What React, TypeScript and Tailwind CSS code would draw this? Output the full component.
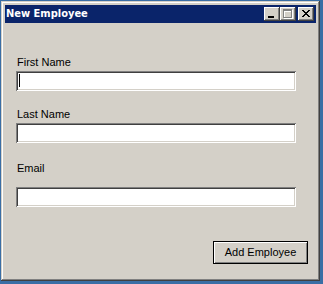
import React from "react";

const raised =
  "shadow-[inset_-1px_-1px_#404040,inset_1px_1px_#ffffff,inset_-2px_-2px_#808080,inset_2px_2px_#d4d0c8]";
const sunken =
  "shadow-[inset_1px_1px_#808080,inset_-1px_-1px_#ffffff,inset_2px_2px_#404040,inset_-2px_-2px_#d4d0c8]";

function CapButton({ children }: { children: React.ReactNode }) {
  return (
    <div className={`w-[16px] h-[14px] bg-[#d4d0c8] ${raised}`}>
      <svg width="16" height="14" viewBox="0 0 16 14" shapeRendering="crispEdges">
        {children}
      </svg>
    </div>
  );
}

const xRows = [
  [0, 1, 6, 7],
  [1, 2, 5, 6],
  [2, 3, 4, 5],
  [3, 4],
  [2, 3, 4, 5],
  [1, 2, 5, 6],
  [0, 1, 6, 7],
];

function TextBox({ caret }: { caret?: boolean }) {
  return (
    <div className={`w-[280px] h-[20px] bg-white ${sunken} pl-[3px] pt-[3px]`}>
      {caret && <div className="w-px h-[13px] bg-black" />}
    </div>
  );
}

function Label({ children, className }: { children: React.ReactNode; className: string }) {
  return (
    <div className={`ml-[12px] h-[13px] leading-[13px] text-[11px] text-black ${className}`}>
      {children}
    </div>
  );
}

export default function App() {
  return (
    <div className="w-[323px] h-[284px] bg-[#3a6ea5] pt-px pl-px" style={{ fontFamily: '"Liberation Sans", Arial, sans-serif' }}>
      <div
        className={`w-[319px] h-[280px] bg-[#d4d0c8] p-[4px] flex flex-col shadow-[inset_-1px_-1px_#404040,inset_1px_1px_#d4d0c8,inset_-2px_-2px_#808080,inset_2px_2px_#ffffff]`}
      >
        <div className="h-[18px] bg-[#0a246a] flex items-center pl-[1px] pr-[2px]">
          <span
            className="text-white font-bold text-[11px] leading-[18px] flex-1"
            style={{ fontFamily: '"DejaVu Sans Condensed", "DejaVu Sans", sans-serif' }}
          >
            New Employee
          </span>
          <CapButton>
            <rect x="4" y="9" width="6" height="2" fill="#000" />
          </CapButton>
          <CapButton>
            <g fill="#ffffff" transform="translate(1,1)">
              <rect x="3" y="2" width="9" height="2" />
              <rect x="3" y="4" width="1" height="7" />
              <rect x="11" y="4" width="1" height="7" />
              <rect x="3" y="10" width="9" height="1" />
            </g>
            <g fill="#808080">
              <rect x="3" y="2" width="9" height="2" />
              <rect x="3" y="4" width="1" height="7" />
              <rect x="11" y="4" width="1" height="7" />
              <rect x="3" y="10" width="9" height="1" />
            </g>
          </CapButton>
          <div className="w-[2px]" />
          <CapButton>
            <g fill="#000">
              {xRows.map((cols, r) =>
                cols.map((c) => <rect key={`${r}-${c}`} x={4 + c} y={3 + r} width="1" height="1" />)
              )}
            </g>
          </CapButton>
        </div>
        <div className="flex flex-col pl-0">
          <Label className="mt-[33px]">First Name</Label>
          <div className="ml-[11px] mt-[2px]">
            <TextBox caret />
          </div>
          <Label className="mt-[17px]">Last Name</Label>
          <div className="ml-[11px] mt-[2px]">
            <TextBox />
          </div>
          <Label className="mt-[19px]">Email</Label>
          <div className="ml-[11px] mt-[12px]">
            <TextBox />
          </div>
          <div className="flex justify-end mt-[34px] pr-[8px]">
            <button className="w-[95px] h-[23px] border border-black bg-[#d4d0c8] shadow-[inset_1px_1px_#ffffff,inset_-1px_-1px_#808080] text-[11px] leading-[21px] text-black">
              Add Employee
            </button>
          </div>
        </div>
      </div>
    </div>
  );
}
